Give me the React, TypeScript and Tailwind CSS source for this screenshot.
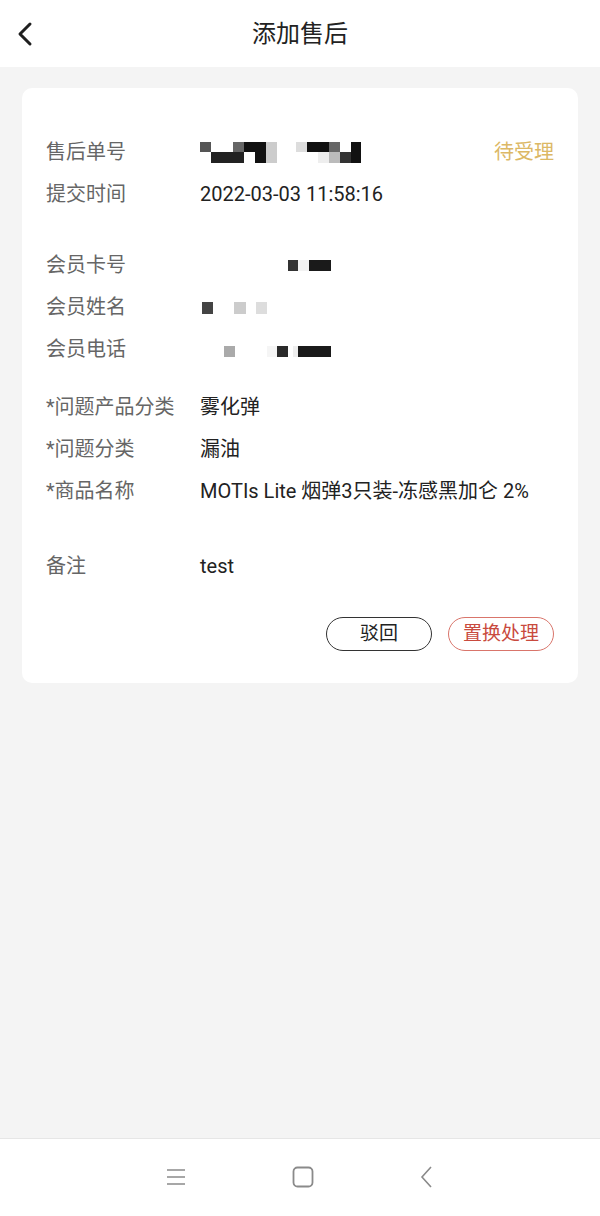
import React from 'react';

// mosaic blocks that hide personal data, x is relative to the value column
type Block = { x: number; y: number; w: number; h: number; c: string };

const orderMosaic: Block[] = [
  { x: 2, y: 0, w: 11, h: 10, c: '#555' },
  { x: 35, y: 0, w: 11, h: 10, c: '#666' },
  { x: 46, y: 0, w: 22, h: 10, c: '#111' },
  { x: 68, y: 0, w: 11, h: 21, c: '#ccc' },
  { x: 13, y: 10, w: 33, h: 11, c: '#222' },
  { x: 57, y: 10, w: 11, h: 11, c: '#111' },
  { x: 98, y: 0, w: 11, h: 10, c: '#ddd' },
  { x: 109, y: 0, w: 22, h: 10, c: '#111' },
  { x: 131, y: 0, w: 11, h: 10, c: '#666' },
  { x: 120, y: 10, w: 11, h: 11, c: '#eee' },
  { x: 131, y: 10, w: 11, h: 11, c: '#bbb' },
  { x: 142, y: 10, w: 11, h: 11, c: '#333' },
  { x: 153, y: 0, w: 10, h: 21, c: '#111' },
];

const cardMosaic: Block[] = [
  { x: 88, y: 0, w: 10, h: 11, c: '#333' },
  { x: 98, y: 0, w: 11, h: 11, c: '#f2f2f2' },
  { x: 109, y: 0, w: 22, h: 11, c: '#1a1a1a' },
];

const nameMosaic: Block[] = [
  { x: 2, y: 0, w: 11, h: 12, c: '#444' },
  { x: 34, y: 0, w: 12, h: 12, c: '#ccc' },
  { x: 56, y: 0, w: 11, h: 12, c: '#ddd' },
];

const phoneMosaic: Block[] = [
  { x: 24, y: 0, w: 11, h: 11, c: '#aaa' },
  { x: 67, y: 0, w: 10, h: 11, c: '#f5f5f5' },
  { x: 77, y: 0, w: 11, h: 11, c: '#2a2a2a' },
  { x: 93, y: 0, w: 5, h: 11, c: '#eee' },
  { x: 98, y: 0, w: 33, h: 11, c: '#1a1a1a' },
];

function Mosaic({ blocks, height }: { blocks: Block[]; height: number }) {
  return (
    <svg width="170" height={height} className="block">
      {blocks.map((b, i) => (
        <rect key={i} x={b.x} y={b.y} width={b.w} height={b.h} fill={b.c} />
      ))}
    </svg>
  );
}

function Row({ label, children, right }: { label: string; children: React.ReactNode; right?: React.ReactNode }) {
  return (
    <div className="flex h-[42px] items-center">
      <div className="w-[154px] shrink-0 text-[#666]">{label}</div>
      <div className="flex-1 text-[#222]">{children}</div>
      {right}
    </div>
  );
}

export default function App() {
  return (
    <div className="flex min-h-[1216px] flex-col bg-[#f4f4f4] font-['Roboto','Noto_Sans_CJK_SC',sans-serif]">
      {/* Header */}
      <header className="relative flex h-[67px] items-center justify-center bg-white">
        <svg className="absolute left-[16px] top-[21px]" width="18" height="26" viewBox="0 0 18 26">
          <path d="M14 3 L4 13 L14 23" fill="none" stroke="#1f1f1f" strokeWidth="3" strokeLinecap="round" strokeLinejoin="round" />
        </svg>
        <h1 className="text-[24px] text-[#222]">添加售后</h1>
      </header>

      <main className="flex-1 px-[22px] pt-[21px]">
        <div className="rounded-[10px] bg-white pb-[32px] pl-[24px] pr-[24px] pt-[43px] text-[20px]">
          <Row label="售后单号" right={<span className="text-[#dcb865]">待受理</span>}>
            <div className="-ml-[2px] pt-[1px]">
              <Mosaic blocks={orderMosaic} height={21} />
            </div>
          </Row>
          <Row label="提交时间">2022-03-03 11:58:16</Row>

          <div className="mt-[29px]">
            <Row label="会员卡号">
              <Mosaic blocks={cardMosaic} height={11} />
            </Row>
            <Row label="会员姓名">
              <div className="pt-[2px]">
                <Mosaic blocks={nameMosaic} height={12} />
              </div>
            </Row>
            <Row label="会员电话">
              <div className="pt-[4px]">
                <Mosaic blocks={phoneMosaic} height={11} />
              </div>
            </Row>
          </div>

          <div className="mt-[16px]">
            <Row label="*问题产品分类">雾化弹</Row>
            <Row label="*问题分类">漏油</Row>
            <Row label="*商品名称">MOTIs Lite 烟弹3只装-冻感黑加仑 2%</Row>
          </div>

          <div className="mt-[33px]">
            <Row label="备注">test</Row>
          </div>

          <div className="mt-[30px] flex justify-end gap-[16px]">
            <button className="h-[34px] w-[106px] rounded-full border border-[#333] text-[19px] text-[#222]">驳回</button>
            <button className="h-[34px] w-[106px] rounded-full border border-[#d9756b] text-[19px] text-[#c94a3e]">置换处理</button>
          </div>
        </div>
      </main>

      {/* Android navigation bar */}
      <nav className="flex h-[78px] items-center border-t border-[#e6e6e6] bg-white">
        <div className="flex w-full items-center justify-between pb-[2px] pl-[166px] pr-[166px]">
          <svg width="20" height="18" viewBox="0 0 20 18">
            <path d="M1 2 H19 M1 9 H19 M1 16 H19" stroke="#8a8a8a" strokeWidth="1.6" />
          </svg>
          <svg width="22" height="22" viewBox="0 0 22 22">
            <rect x="1.5" y="1.5" width="19" height="19" rx="4" fill="none" stroke="#8a8a8a" strokeWidth="1.8" />
          </svg>
          <svg width="14" height="22" viewBox="0 0 14 22">
            <path d="M11 1 L2 11 L11 21" fill="none" stroke="#8a8a8a" strokeWidth="1.6" />
          </svg>
        </div>
      </nav>
    </div>
  );
}
